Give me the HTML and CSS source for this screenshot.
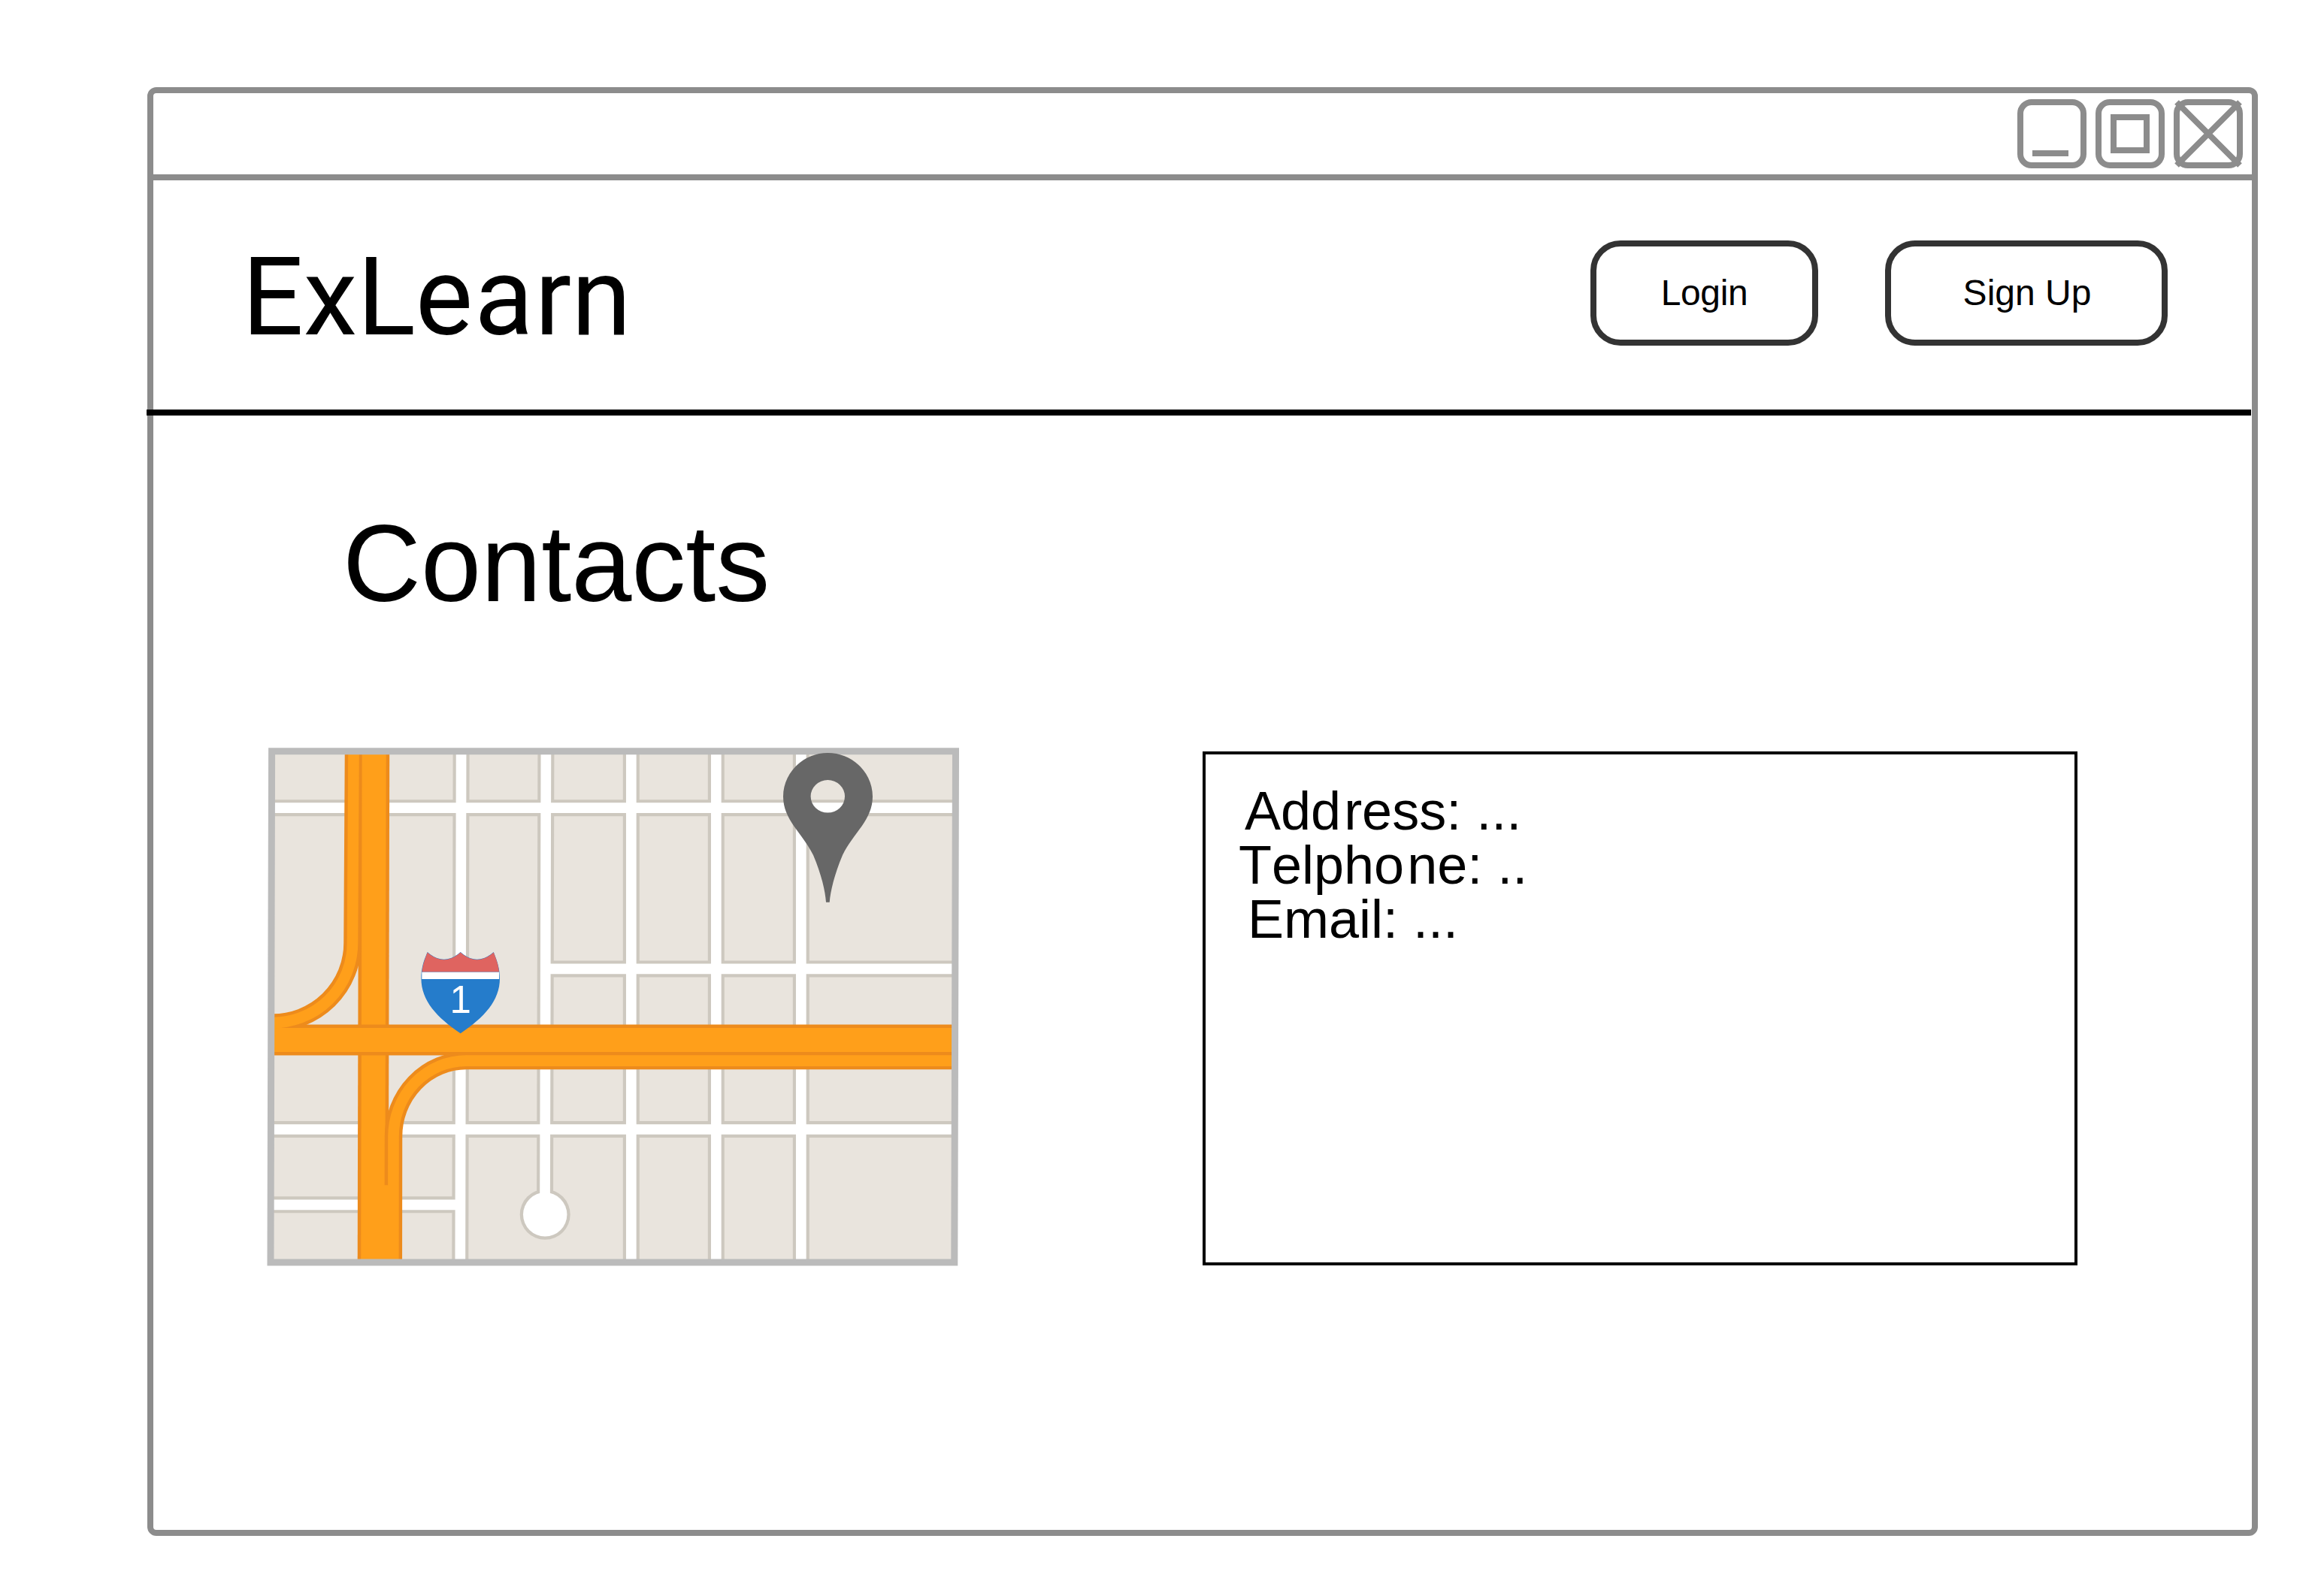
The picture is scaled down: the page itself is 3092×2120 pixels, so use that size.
FILE: index.html
```html
<!DOCTYPE html>
<html lang="en">
<head>
<meta charset="utf-8">
<title>ExLearn - Contacts</title>
<link rel="stylesheet" href="styles.css">
</head>
<body>
<div class="window">
  <div class="titlebar">
    <svg class="control" viewBox="0 0 92 92"><rect x="4" y="4" width="84" height="84" rx="15"/><path d="M20 72H68"/></svg>
    <svg class="control" viewBox="0 0 92 92"><rect x="4" y="4" width="84" height="84" rx="15"/><rect x="24" y="24" width="44" height="44"/></svg>
    <svg class="control" viewBox="0 0 92 92"><rect x="4" y="4" width="84" height="84" rx="15"/><path d="M4 4L88 88M88 4L4 88"/></svg>
  </div>
  <header class="header">
    <div class="brand">ExL<span class="loose">ea</span>rn</div>
    <nav class="actions">
      <button class="btn btn-login">Login</button>
      <button class="btn btn-signup">Sign Up</button>
    </nav>
  </header>
  <main class="main">
    <h1 class="title">Contacts</h1>
    <div class="content">
      <svg class="map" viewBox="350 990 930 700">
        <path fill="#e9e4dd" d="M361 1000H1271V1680H360Z"/>
        <!-- street edges -->
        <g fill="none" stroke="#cdc8bf" stroke-width="22">
          <path d="M613.6 1000L612.3 1680M726.4 1000L725 1610M839.8 1000V1680M952.8 1000V1680M1065.8 1000V1680"/>
          <path d="M361 1075.2H1270M726 1289.4H1270M361 1503H1270M361 1603.3H612.3"/>
        </g>
        <circle cx="725.2" cy="1616.3" r="33.5" fill="#cdc8bf"/>
        <!-- streets -->
        <g fill="none" stroke="#fff" stroke-width="13.7">
          <path d="M613.6 1000L612.3 1680M726.4 1000L725 1610M839.8 1000V1680M952.8 1000V1680M1065.8 1000V1680"/>
          <path d="M361 1075.2H1270M726 1289.4H1270M361 1503H1270M361 1603.3H612.3"/>
        </g>
        <circle cx="725.2" cy="1616.3" r="29.2" fill="#fff"/>
        <!-- highways -->
        <g fill="none">
          <g stroke="#ed8b1c">
            <path stroke-width="41" d="M497.7 1000L496.2 1680"/>
            <path stroke-width="23.5" d="M470.5 1000L469 1255A106 106 0 0 1 361 1361"/>
          </g>
          <path stroke="#ff9f1a" stroke-width="32" d="M497.7 1000L496.2 1680"/>
          <g stroke="#ed8b1c">
            <path stroke-width="41" d="M361 1384H1270"/>
            <path stroke-width="23.5" d="M1270 1411.6H620.5A97 101 0 0 0 523.5 1513L523.3 1680"/>
          </g>
          <g stroke="#ff9f1a">
            <path stroke-width="32.2" d="M361 1384H1270"/>
            <path stroke-width="14.6" d="M470.5 1000L469 1255A106 106 0 0 1 361 1361"/>
            <path stroke-width="14.6" d="M1270 1411.6H620.5A97 101 0 0 0 523.5 1513L523.3 1680"/>
            <path stroke-width="8" d="M514.5 1577.3V1680"/>
          </g>
        </g>
        <path fill="none" stroke="#bbb" stroke-width="9" d="M361.6 999.8H1271.5L1269.8 1680.1H360Z"/>
        <!-- route shield -->
        <path fill="#257ccb" d="M568.7 1267Q590.7 1286.6 612.7 1267Q634.7 1286.6 656.7 1267C661 1278 665 1288 665 1302C665 1332 644 1354 612.7 1375.3C581.4 1354 560.4 1332 560.4 1302C560.4 1288 564 1278 568.7 1267Z"/>
        <path fill="#df6460" d="M568.7 1267.5Q590.7 1287 612.7 1267.5Q634.7 1287 656.7 1267.5C660 1276 663 1283 664 1293.5H561.4C562.5 1283 565.5 1276 568.7 1267.5Z"/>
        <path fill="#fff" d="M561.3 1293.7H664.1V1303H561.3Z"/>
        <text class="route" x="612.7" y="1348">1</text>
        <!-- location pin -->
        <path fill="#676767" fill-rule="evenodd" d="M1042 1060C1042 1028 1069 1002 1101.3 1002C1134 1002 1161 1028 1161 1060C1161 1091 1136 1108 1121 1138C1110 1164 1105 1186 1103.7 1200.7H1099C1098 1186 1093 1164 1082 1138C1067 1108 1042 1091 1042 1060ZM1078.6 1059.8a22.7 21.8 0 1 0 45.4 0a22.7 21.8 0 1 0 -45.4 0Z"/>
      </svg>
      <address class="details">
        <p class="line line-address">Ad<span class="wide">d</span>ress: ...</p>
        <p class="line line-phone">Telph<span class="wide">o</span>ne: ..</p>
        <p class="line line-email">Email: ...</p>
      </address>
    </div>
  </main>
</div>
</body>
</html>
```
FILE: styles.css
```css
* { box-sizing: border-box; }
body {
  margin: 0;
  padding: 116px 88px 76px 196px;
  background: #fff;
  color: #000;
  font-family: "Liberation Sans", Arial, sans-serif;
}
.window {
  height: 1928px;
  border: 8px solid #8c8c8c;
  border-radius: 12px;
}
.titlebar {
  display: flex;
  justify-content: flex-end;
  gap: 12px;
  height: 116px;
  padding: 8px 12px;
  border-bottom: 8px solid #8c8c8c;
}
.control {
  width: 92px;
  height: 92px;
  fill: none;
  stroke: #8c8c8c;
  stroke-width: 8;
}
.header {
  display: flex;
  justify-content: space-between;
  align-items: flex-start;
  height: 313px;
  margin: 0 1px 0 -9px;
  padding: 80px 111px 0 127px;
  border-bottom: 8px solid #000;
}
.brand {
  margin-top: -9px;
  font: 144px/169px Roboto, sans-serif;
}
.loose { letter-spacing: 2px; }
.actions { display: flex; gap: 89px; }
.btn {
  height: 140px;
  padding: 0;
  border: 8px solid #333;
  border-radius: 40px;
  background: #fff;
  color: #000;
  font: 48px/1 "Liberation Sans", Arial, sans-serif;
}
.btn-login { width: 303px; letter-spacing: -0.4px; }
.btn-signup { width: 376px; padding-left: 2px; }
.main { padding: 115px 0 0; }
.title {
  margin: 0 0 0 252px;
  font-size: 144px;
  font-weight: 400;
  line-height: 166px;
}
.content {
  display: flex;
  gap: 320px;
  margin: 156px 0 0 146px;
}
.map { width: 930px; height: 700px; }
.route {
  fill: #fff;
  font-size: 51px;
  text-anchor: middle;
}
.details {
  width: 1164px;
  height: 684px;
  margin-top: 10px;
  padding: 39px 0 0 44px;
  border: 4px solid #000;
  font-style: normal;
  font-kerning: none;
}
.line {
  margin: 0;
  font-size: 72px;
  line-height: 72px;
}
.line-address { padding-left: 8px; }
.line-email { padding-left: 12px; }
.wide { letter-spacing: 4px; }
```
